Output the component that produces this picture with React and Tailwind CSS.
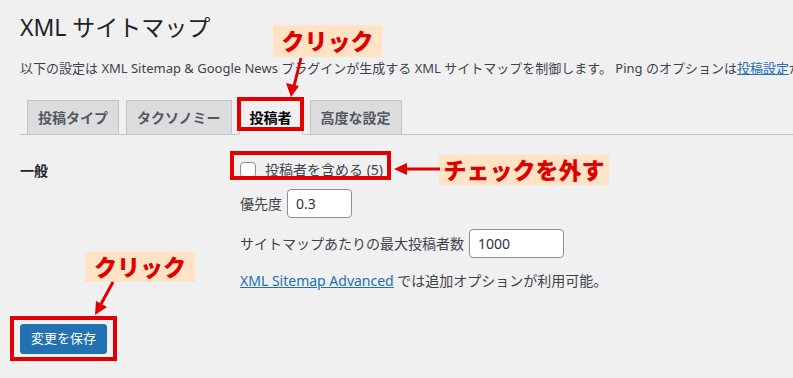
import React from "react";

const FONT = { fontFamily: '"Noto Sans", "Noto Sans CJK JP", sans-serif' };

function Tab({ children, active }) {
  return (
    <div
      className={
        "ml-[7px] h-[35px] px-[10px] border border-[#c3c4c7] text-[14px] leading-[24px] font-semibold pt-[5px] -mb-px " +
        (active ? "bg-[#f0f0f1] border-b-[#f0f0f1] text-black" : "bg-[#dcdcde] text-[#50575e]")
      }
    >
      {children}
    </div>
  );
}

export default function App() {
  return (
    <div className="relative w-[793px] h-[378px] overflow-hidden bg-[#f0f0f1] text-[#3c434a]" style={FONT}>
      <div className="pl-5 pt-[12px]">
        <h1 className="text-[23px] leading-[30px] text-[#1d2327] font-normal">XML サイトマップ</h1>
        <p className="mt-[16px] text-[13px] leading-[20px] whitespace-nowrap">
          以下の設定は XML Sitemap &amp; Google News プラグインが生成する XML サイトマップを制御します。 Ping のオプションは
          <span className="text-[#2271b1] underline">投稿設定</span>が
        </p>
        <div className="mt-[21px] flex border-b border-[#c3c4c7] h-[36px] items-end">
          <Tab>投稿タイプ</Tab>
          <Tab>タクソノミー</Tab>
          <Tab active>投稿者</Tab>
          <Tab>高度な設定</Tab>
        </div>

        <div className="flex">
          <div className="w-[220px] pt-[26px] text-[14px] leading-[20px] font-semibold text-[#1d2327]">一般</div>
          <div className="pt-[25px] text-[14px]">
            <label className="flex items-center h-[20px]">
              <span className="w-4 h-4 rounded-[4px] border border-[#8c8f94] bg-white shrink-0" />
              <span className="ml-[9px] leading-[20px]">投稿者を含める (5)</span>
            </label>
            <div className="mt-[9px] flex items-center gap-[5px]">
              <span>優先度</span>
              <div className="w-[65px] h-[29px] rounded-[4px] border border-[#8c8f94] bg-white pl-[8px] flex items-center text-[#2c3338]">0.3</div>
            </div>
            <div className="mt-[11px] flex items-center gap-[5px]">
              <span>サイトマップあたりの最大投稿者数</span>
              <div className="w-[95px] h-[29px] rounded-[4px] border border-[#8c8f94] bg-white pl-[8px] flex items-center text-[#2c3338]">1000</div>
            </div>
            <p className="mt-[13px] leading-[20px] whitespace-nowrap">
              <span className="text-[#2271b1] underline">XML Sitemap Advanced</span> では追加オプションが利用可能。
            </p>
          </div>
        </div>

        <div className="mt-[33px]">
          <div className="inline-flex items-center h-[30px] px-[10px] rounded-[3px] bg-[#2271b1] border border-[#2271b1] text-white text-[13px]">
            変更を保存
          </div>
        </div>
      </div>

      {/* annotations */}
      <div className="absolute left-[237px] top-[97px] w-[67px] h-[34px] border-[4px] border-[#e00000]" />
      <div className="absolute left-[230px] top-[151px] w-[161px] h-[29px] border-[4px] border-[#e00000]" />
      <div className="absolute left-[10px] top-[316px] w-[107px] h-[45px] border-[4px] border-[#e00000]" />

      <div className="absolute left-[273px] top-[25px] w-[109px] h-[32px] bg-[#ffe3c4] text-[#e00000] text-[23px] font-extrabold flex items-center justify-center leading-none">クリック</div>
      <div className="absolute left-[439px] top-[155px] w-[170px] h-[30px] bg-[#ffe3c4] text-[#e00000] text-[23px] font-extrabold flex items-center justify-center leading-none">チェックを外す</div>
      <div className="absolute left-[85px] top-[252px] w-[110px] h-[30px] bg-[#ffe3c4] text-[#e00000] text-[23px] font-extrabold flex items-center justify-center leading-none">クリック</div>

      <svg className="absolute inset-0 pointer-events-none" width="793" height="378">
        <g stroke="#e00000" strokeWidth="3" fill="#e00000">
          <line x1="301" y1="58" x2="294" y2="86" />
          <polygon points="291,97 286,83 299,86" stroke="none" />
          <line x1="440" y1="169" x2="404" y2="169" />
          <polygon points="394,169 407,163 407,175" stroke="none" />
          <line x1="113" y1="282" x2="101" y2="304" />
          <polygon points="95,315 96,301 107,307" stroke="none" />
        </g>
      </svg>
    </div>
  );
}
